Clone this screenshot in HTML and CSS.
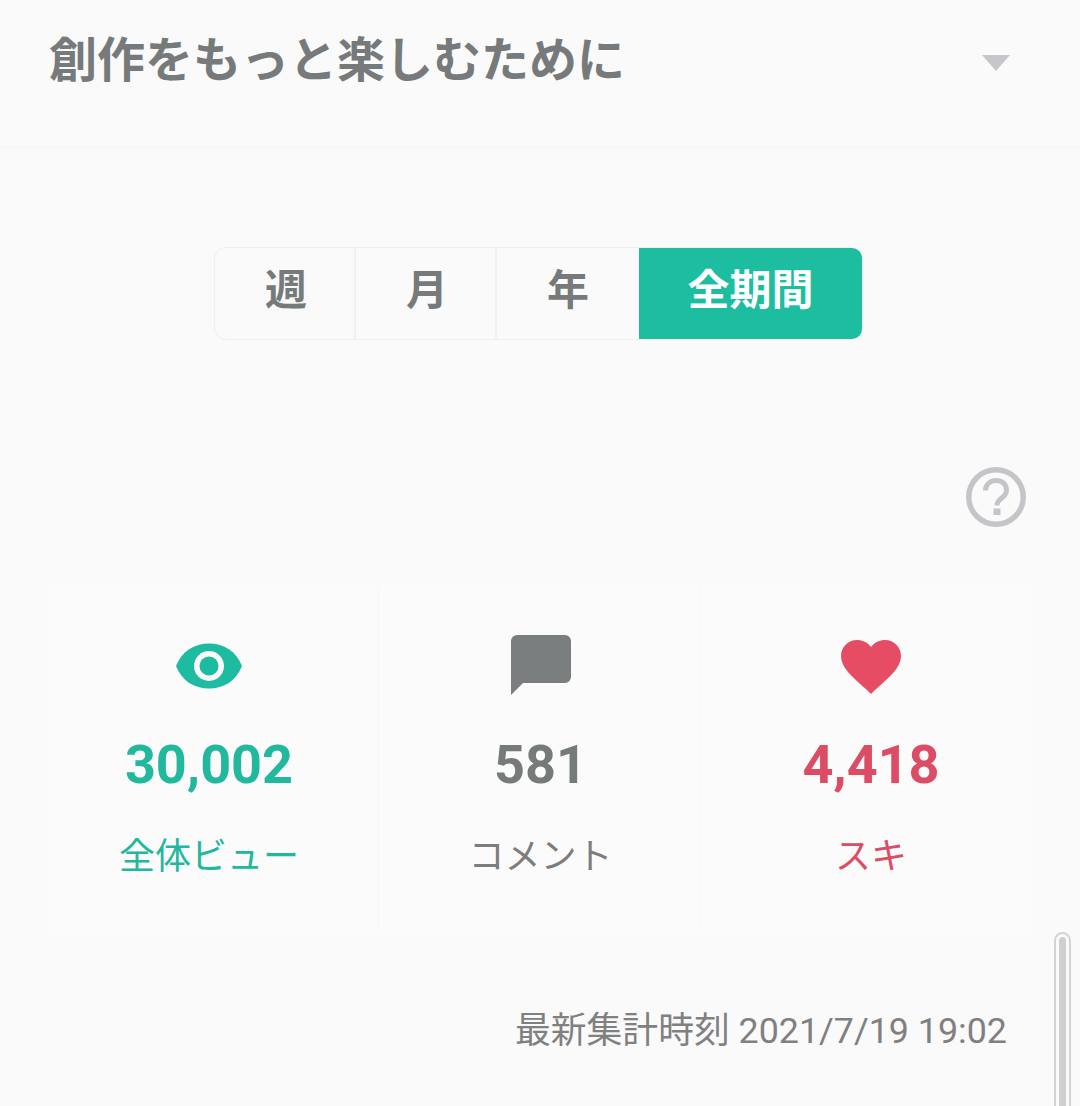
FILE: index.html
```html
<!DOCTYPE html>
<html lang="ja">
<head>
<meta charset="utf-8">
<title>創作をもっと楽しむために</title>
<link rel="stylesheet" href="styles.css">
</head>
<body>
<header class="header">
  <h1 class="title">創作をもっと楽しむために</h1>
  <span class="caret"></span>
</header>
<div class="band"></div>
<main class="main">
  <div class="tabs">
    <div class="tab">週</div>
    <div class="tab">月</div>
    <div class="tab">年</div>
    <div class="tab tab-active">全期間</div>
  </div>
  <div class="help-row">
    <svg class="help" viewBox="0 0 60 60" aria-hidden="true">
      <circle cx="30" cy="30" r="27.250" fill="none" stroke="#c4c5c8" stroke-width="5.500"/>
      <path d="M19.500 23.500c0-6 4.600-10 10.600-10 6 0 10.400 3.800 10.400 9.400 0 4.400-2.400 6.400-5 8.300-2.600 1.900-4.400 3.200-4.400 6.800v.5" fill="none" stroke="#c4c5c8" stroke-width="5"/>
      <rect x="27.500" y="41.500" width="7" height="6.500" fill="#c4c5c8"/>
    </svg>
  </div>
  <section class="stats">
    <div class="stat stat-green">
      <svg class="icon" viewBox="0 0 66 46" aria-hidden="true">
        <path d="M0 23C6 8 18 .5 33 .5S60 8 66 23C60 38 48 45.500 33 45.500S6 38 0 23Z" fill="#1dbb9f"/>
        <circle cx="33" cy="23" r="15" fill="#fafafa"/>
        <circle cx="33" cy="23" r="9.500" fill="#1dbb9f"/>
      </svg>
      <div class="num">30,002</div>
      <div class="label">全体ビュー</div>
    </div>
    <div class="stat stat-gray">
      <svg class="icon" viewBox="0 0 60 60" aria-hidden="true">
        <path d="M6 0h48a6 6 0 0 1 6 6v36a6 6 0 0 1-6 6H12L0 60V6a6 6 0 0 1 6-6Z" fill="#7b7e7e"/>
      </svg>
      <div class="num">581</div>
      <div class="label">コメント</div>
    </div>
    <div class="stat stat-red">
      <svg class="icon" viewBox="0 0 60 54" aria-hidden="true">
        <path d="M30 54 26 50C10 36 0 27 0 16 0 7 7 0 16 0 21 0 27 2.500 30 7 33 2.500 39 0 44 0 53 0 60 7 60 16 60 27 50 36 34 50Z" fill="#e64d65"/>
      </svg>
      <div class="num">4,418</div>
      <div class="label">スキ</div>
    </div>
  </section>
  <p class="updated">最新集計時刻 2021/7/19 19:02</p>
</main>
<div class="scrollbar"></div>
</body>
</html>
```
FILE: styles.css
```css
html, body {
  margin: 0;
  padding: 0;
  height: 1106px;
  overflow: hidden;
  background: #fafafa;
  font-family: Roboto, "Noto Sans CJK JP", sans-serif;
}
.header {
  display: flex;
  align-items: flex-start;
  justify-content: space-between;
  height: 146px;
  padding: 0 70px 0 49px;
  border-bottom: 2px solid #f6f6f6;
}
.title {
  margin: 27px 0 0;
  font-size: 48px;
  line-height: 68px;
  font-weight: 700;
  color: #767a7a;
}
.caret {
  margin-top: 55px;
  width: 0;
  height: 0;
  border-left: 14px solid transparent;
  border-right: 14px solid transparent;
  border-top: 16px solid #c6c7ca;
}
.band {
  height: 20px;
  background: #f9f9f9;
}
.main {
  display: flex;
  flex-direction: column;
}
.tabs {
  align-self: flex-start;
  display: flex;
  margin: 79px 0 0 214px;
  height: 93px;
  box-sizing: border-box;
  border: 1px solid #efefef;
  border-radius: 12px;
}
.tab {
  width: 141px;
  box-sizing: border-box;
  padding: 0 0 14px 3px;
  display: flex;
  align-items: center;
  justify-content: center;
  border-right: 2px solid #f1f1f1;
  font-size: 42px;
  font-weight: 700;
  color: #767a7a;
}
.tab:nth-child(3) {
  width: 142px;
  padding-left: 0;
  border-right: 0;
}
.tab-active {
  width: 223px;
  padding-left: 0;
  border-right: 0;
  border-radius: 0 10px 10px 0;
  background: #1dbd9f;
  color: #fff;
}
.help-row {
  display: flex;
  justify-content: flex-end;
  padding: 127px 54px 0 0;
}
.help {
  width: 60px;
  height: 60px;
}
.stats {
  display: grid;
  grid-template-columns: 331px 322px 331px;
  margin: 58px 48px 0;
  height: 346px;
  background: #fbfbfb;
}
.stat {
  display: flex;
  flex-direction: column;
  align-items: center;
  box-sizing: border-box;
  border-right: 2px solid #f8f8f8;
}
.stat-green {
  padding-right: 7px;
}
.stat-gray {
  padding-left: 3px;
}
.stat-red {
  padding-left: 9px;
  border-right: 0;
}
.icon {
  height: 60px;
  margin-top: 50px;
}
.stat-green .icon {
  height: 46px;
  margin-top: 58px;
  margin-bottom: 6px;
}
.stat-red .icon {
  height: 54px;
  margin-top: 55px;
  margin-bottom: 1px;
}
.num {
  margin-top: 38px;
  font-size: 54px;
  line-height: 64px;
  font-weight: 700;
}
.label {
  margin-top: 36px;
  font-size: 36px;
  line-height: 48px;
}
.stat-green { color: #22b89d; }
.stat-gray { color: #767a7a; }
.stat-red { color: #dc4c64; }
.stat-gray .label { color: #7d7d7d; }
.updated {
  margin: 76px 73px 0 0;
  text-align: right;
  font-size: 35.800px;
  line-height: 48px;
  color: #808080;
}
.scrollbar {
  position: absolute;
  left: 1054px;
  top: 932px;
  width: 17px;
  height: 200px;
  box-sizing: border-box;
  border: 2px solid #d4d4d4;
  border-radius: 9px 9px 0 0;
  background: #fafafa;
}
.scrollbar::after {
  content: "";
  position: absolute;
  left: 3px;
  top: 3px;
  width: 7px;
  height: 200px;
  border-radius: 4px 4px 0 0;
  background: #cfcfcf;
}
```
